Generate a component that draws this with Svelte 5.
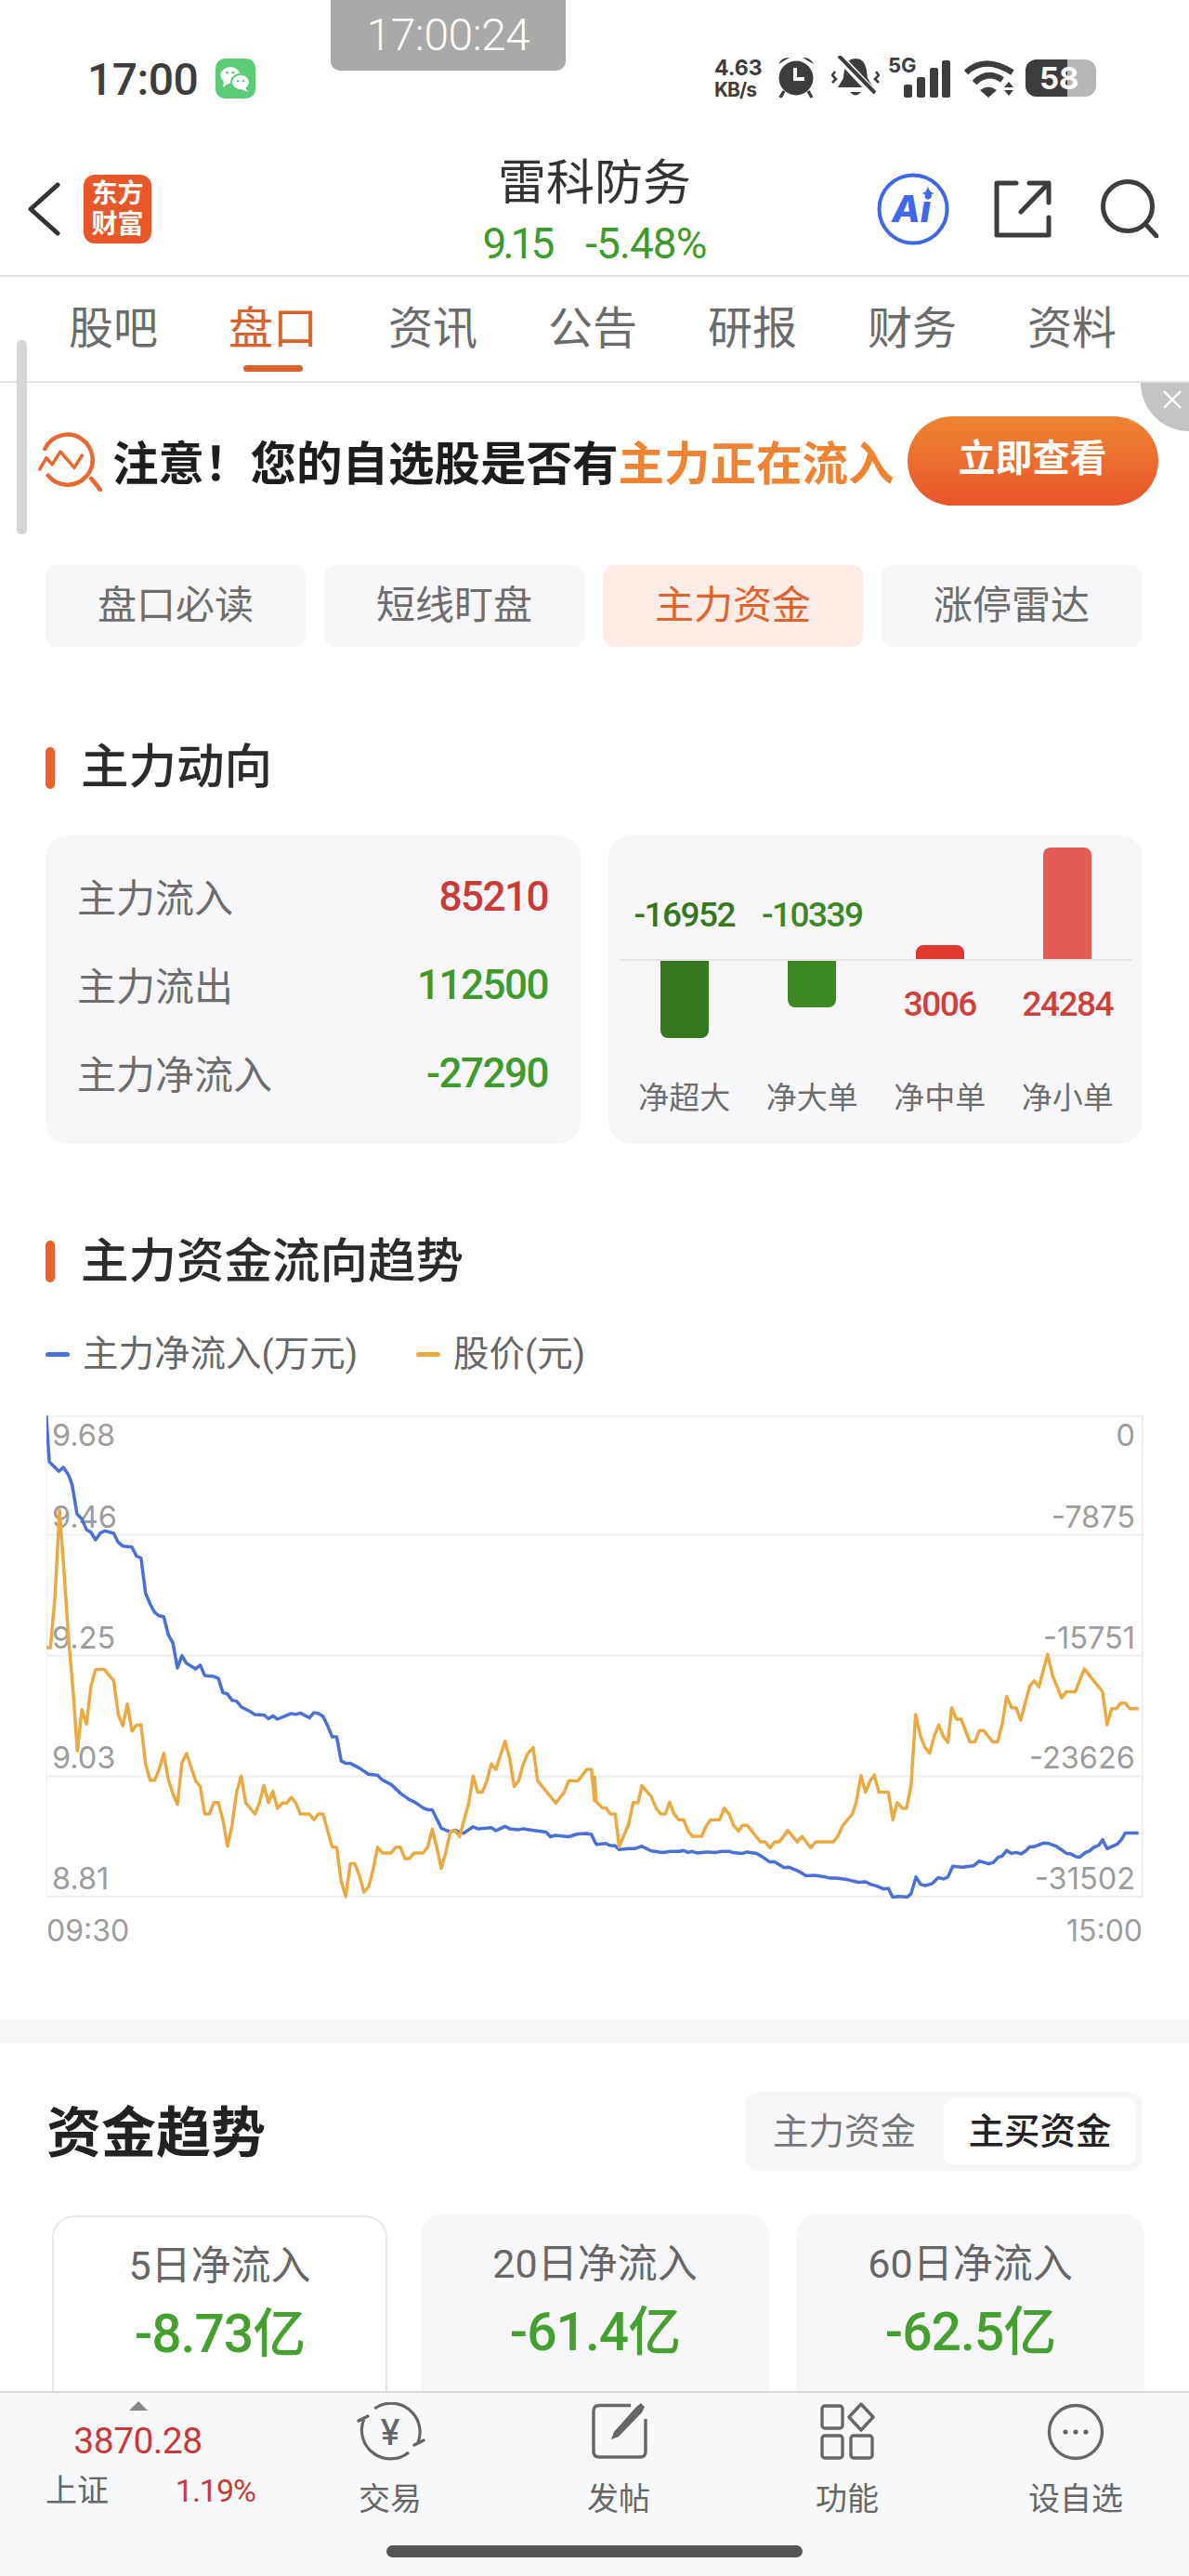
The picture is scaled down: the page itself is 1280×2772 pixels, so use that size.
<script>
	const tabs = ["股吧", "盘口", "资讯", "公告", "研报", "财务", "资料"]
	const pills = ["盘口必读", "短线盯盘", "主力资金", "涨停雷达"]

	const flowRows = [
		{ label: "主力流入", value: "85210", tone: "red" },
		{ label: "主力流出", value: "112500", tone: "green" },
		{ label: "主力净流入", value: "-27290", tone: "green" }
	]

	const flowBars = [
		{ label: "净超大", value: "-16952", height: 85, color: "#36761f", up: false },
		{ label: "净大单", value: "-10339", height: 52, color: "#3c8823", up: false },
		{ label: "净中单", value: "3006", height: 15, color: "#de3a30", up: true },
		{ label: "净小单", value: "24284", height: 120, color: "#e25c55", up: true }
	]

	const trends = [
		{ label: "5日净流入", value: "-8.73亿" },
		{ label: "20日净流入", value: "-61.4亿" },
		{ label: "60日净流入", value: "-62.5亿" }
	]

	const gridRows = [
		{ y: 1523.5, left: "9.68", right: "0", text: 1556 },
		{ y: 1651.5, left: "9.46", right: "-7875", text: 1644 },
		{ y: 1781.5, left: "9.25", right: "-15751", text: 1774 },
		{ y: 1911.5, left: "9.03", right: "-23626", text: 1903 },
		{ y: 2041, left: "8.81", right: "-31502", text: 2033 }
	]

	// traced from the reference, in two halves
	const blueLeft = "122,437 130,535 155,555 167,547 180,562 190,583 203,645 215,655 228,678 240,684 252,700 265,685 277,681 300,686 312,705 324,713 348,715 360,734 372,738 384,812 396,835 408,853 420,860 432,862 444,900 456,917 468,970 480,944 492,960 516,972 528,964 540,986 564,988 576,992 588,1022 600,1025 612,1038 624,1040 636,1052 660,1062 672,1068 696,1069 708,1077 720,1071 732,1078 756,1070 768,1066 780,1068 792,1065 816,1075 828,1064 840,1066 852,1072 864,1092 876,1115 888,1115 900,1166 912,1171 924,1171 948,1181 972,1194 996,1196 1008,1206 1032,1216 1056,1234 1080,1248 1092,1252 1116,1265 1128,1269 1140,1269 1164,1308 1188,1316 1200,1312 1212,1317 1224,1318 1248,1305 1260,1309 1296,1307 1308,1313 1332,1304 1344,1309 1368,1311 1380,1309 1404,1312 1440,1316 1452,1326 1464,1323 1500,1326 1524,1320 1548,1319 1560,1321 1568,1335"
	const blueRight = "0,1335 5,1342 30,1340 40,1344 55,1345 65,1353 90,1351 105,1351 125,1346 150,1356 180,1359 200,1357 225,1357 235,1355 247,1359 258,1357 270,1360 295,1358 320,1359 335,1357 355,1357 365,1359 390,1361 403,1358 428,1361 440,1367 462,1379 475,1379 500,1391 512,1390 537,1398 558,1408 580,1407 605,1410 620,1413 640,1413 665,1416 695,1422 715,1421 728,1426 745,1430 762,1436 775,1435 787,1454 800,1452 825,1453 835,1446 848,1411 860,1426 872,1429 890,1425 907,1412 920,1415 932,1411 945,1388 970,1390 1000,1387 1015,1377 1040,1383 1052,1380 1065,1369 1075,1367 1087,1355 1100,1361 1112,1359 1125,1362 1137,1356 1148,1347 1160,1347 1185,1339 1197,1340 1220,1347 1245,1361 1257,1362 1270,1368 1280,1369 1295,1359 1305,1356 1317,1348 1330,1344 1340,1332 1352,1351 1378,1342 1390,1332 1400,1318 1435,1318"
	const orangeLeft = "122,927 133,927 145,820 157,637 170,780 182,920 193,1020 204,1145 216,1058 228,1088 240,1008 252,973 275,973 300,997 312,1068 324,1092 336,1046 348,1103 360,1091 372,1090 384,1172 396,1207 408,1207 420,1183 432,1150 444,1205 456,1235 468,1258 480,1170 492,1150 516,1208 528,1220 540,1278 552,1278 564,1254 576,1254 588,1290 600,1346 612,1302 624,1232 636,1198 648,1254 672,1278 684,1255 696,1218 708,1254 720,1230 732,1266 744,1255 756,1255 768,1243 780,1254 792,1278 816,1278 828,1290 840,1278 852,1278 876,1348 888,1348 900,1420 912,1452 924,1383 936,1383 948,1408 960,1443 972,1432 984,1396 996,1348 1008,1360 1032,1360 1044,1348 1056,1348 1068,1372 1080,1372 1092,1360 1116,1360 1128,1348 1140,1310 1152,1348 1164,1393 1176,1358 1188,1315 1200,1313 1212,1326 1236,1256 1248,1198 1260,1232 1272,1232 1284,1208 1296,1172 1308,1184 1332,1124 1344,1160 1356,1220 1368,1208 1380,1172 1392,1150 1406,1138 1418,1208 1466,1255 1488,1232 1500,1208 1524,1208 1548,1184 1560,1184 1568,1250"
	const orangeRight = "0,1200 5,1252 20,1265 30,1265 42,1278 55,1278 65,1347 90,1300 102,1254 115,1254 125,1218 150,1242 163,1266 175,1278 187,1278 198,1253 210,1278 222,1290 235,1290 247,1314 258,1325 283,1325 295,1302 307,1290 330,1290 342,1266 355,1278 367,1302 380,1314 390,1302 403,1302 438,1337 450,1337 463,1349 475,1337 487,1337 510,1313 535,1337 547,1325 570,1349 583,1337 630,1337 642,1325 655,1302 680,1278 690,1255 703,1197 715,1232 727,1208 738,1196 750,1232 775,1232 787,1290 798,1254 812,1266 823,1266 835,1218 847,1068 860,1114 872,1138 884,1150 896,1114 908,1090 920,1114 932,1127 942,1054 955,1078 967,1078 990,1126 1003,1126 1015,1102 1027,1102 1050,1126 1063,1126 1075,1090 1087,1030 1100,1054 1112,1054 1124,1080 1148,1008 1160,997 1172,1010 1195,941 1208,986 1232,1033 1244,1020 1268,1020 1292,972 1340,1020 1352,1090 1364,1056 1376,1056 1388,1044 1400,1044 1412,1056 1435,1056"

	const toPoints = (str, offset) =>
		str
			.split(" ")
			.map(p => {
				const [x, y] = p.split(",").map(Number)
				return `${(offset + x / 2.45).toFixed(1)},${(1300 + y / 1.96).toFixed(1)}`
			})
			.join(" ")

	const bluePoints = toPoints(blueLeft, 0) + " " + toPoints(blueRight, 640)
	const orangePoints = toPoints(orangeLeft, 0) + " " + toPoints(orangeRight, 640)
</script>

<div class="page">
	<div class="status">
		<span class="status-time">17:00</span>
		<svg class="wechat" width="43" height="43" viewBox="0 0 43 43">
			<rect width="43" height="43" rx="10" fill="#5ccb76" />
			<ellipse cx="16" cy="18" rx="10.5" ry="9" fill="#fff" />
			<path d="M9 24 L8 31 L15 26 Z" fill="#fff" />
			<ellipse cx="27" cy="25.5" rx="10" ry="8.5" fill="#fff" stroke="#5ccb76" stroke-width="2" />
			<path d="M32 31 L35 36 L27 33 Z" fill="#fff" />
			<circle cx="12.5" cy="15" r="1.5" fill="#5ccb76" />
			<circle cx="19" cy="15" r="1.5" fill="#5ccb76" />
			<circle cx="24" cy="24" r="1.3" fill="#5ccb76" />
			<circle cx="30" cy="24" r="1.3" fill="#5ccb76" />
		</svg>
		<div class="status-right">
			<div class="speed"><span>4.63</span><span>KB/s</span></div>
			<svg class="alarm" width="40" height="46" viewBox="0 0 40 46">
				<circle cx="20" cy="24" r="18.5" fill="#3d3d3d" />
				<path d="M1 9 Q5 1 13 2 Z M39 9 Q35 1 27 2 Z" fill="#3d3d3d" />
				<path d="M7 38 L3 45 M33 38 L37 45" stroke="#3d3d3d" stroke-width="3.5" />
				<path d="M19 13 V25 H29" fill="none" stroke="#fff" stroke-width="4" />
			</svg>
			<svg class="bell" width="52" height="46" viewBox="0 0 52 46">
				<path d="M26 3 C37 3 38 14 39 24 L45 34 H7 L13 24 C14 14 15 3 26 3 Z" fill="#3d3d3d" />
				<path d="M20 39 H32 Q26 46 20 39 Z" fill="#3d3d3d" />
				<path d="M9 2 L46 41" stroke="#fff" stroke-width="9" />
				<path d="M8 0 L47 40" stroke="#3d3d3d" stroke-width="4" />
				<path d="M4 17 L1 21 L5 25 L1 29 M48 17 L51 21 L47 25 L51 29" fill="none" stroke="#3d3d3d" stroke-width="2.6" />
			</svg>
			<svg class="signal" width="67" height="46" viewBox="0 0 67 46">
				<text x="0" y="18" class="net-label">5G</text>
				<rect x="17" y="31" width="9" height="14" rx="2" fill="#3d3d3d" />
				<rect x="31" y="23" width="9" height="22" rx="2" fill="#3d3d3d" />
				<rect x="45" y="13" width="9" height="32" rx="2" fill="#3d3d3d" />
				<rect x="58" y="5" width="9" height="40" rx="2" fill="#3d3d3d" />
			</svg>
			<svg class="wifi" width="54" height="40" viewBox="0 0 54 40">
				<path d="M2 13 Q22 -6 52 13" fill="none" stroke="#3d3d3d" stroke-width="6.5" />
				<path d="M11 24 Q25 10 41 21" fill="none" stroke="#3d3d3d" stroke-width="6.5" />
				<path d="M17 32 Q26 25 35 32 L26 40 Z" fill="#3d3d3d" />
				<path d="M48 23 L53 29 H43 Z M43 32 H53 L48 38 Z" fill="#3d3d3d" />
			</svg>
			<div class="battery"><span class="battery-fill"></span><span class="battery-level">58</span></div>
		</div>
	</div>

	<span class="clock-pill">17:00:24</span>

	<header class="header">
		<div class="header-left">
			<svg width="36" height="58" viewBox="0 0 36 58">
				<path d="M33 3 L4 29 L33 55" fill="none" stroke="#333" stroke-width="5" stroke-linecap="round" stroke-linejoin="round" />
			</svg>
			<div class="logo"><span>东方</span><span>财富</span></div>
		</div>
		<div class="header-title">
			<div class="name">雷科防务</div>
			<div class="quote"><span class="quote-price">9.15</span><span>-5.48%</span></div>
		</div>
		<div class="header-right">
			<svg width="78" height="78" viewBox="0 0 78 78">
				<circle cx="39" cy="39" r="36.5" fill="none" stroke="#3f68e8" stroke-width="4" />
				<text x="16" y="53" class="ai-label">Ai</text>
				<path d="M55 14 Q56 21 62 22 Q56 23 55 29 Q54 23 48 22 Q54 21 55 14 Z" fill="#3f68e8" />
			</svg>
			<svg width="62" height="62" viewBox="0 0 62 62">
				<path d="M24 3 H3 V59 H59 V40" fill="none" stroke="#3d3d3d" stroke-width="5" stroke-linecap="round" stroke-linejoin="round" />
				<path d="M38 3 H59 V24 M59 3 L29 34" fill="none" stroke="#3d3d3d" stroke-width="5" stroke-linecap="round" stroke-linejoin="round" />
			</svg>
			<svg width="63" height="63" viewBox="0 0 63 63">
				<circle cx="30" cy="29" r="26.5" fill="none" stroke="#3d3d3d" stroke-width="5" />
				<path d="M49 48 L61 61" stroke="#3d3d3d" stroke-width="5" stroke-linecap="round" />
			</svg>
		</div>
	</header>

	<nav class="tabs">
		{#each tabs as tab, i}
			<div class="tab" class:tab--active={i === 1}>{tab}</div>
		{/each}
	</nav>

	<span class="scrollbar"></span>

	<div class="banner">
		<svg class="banner-icon" width="70" height="66" viewBox="0 0 70 66">
			<path d="M8.3 20 A27 27 0 1 1 11.7 48.7" fill="none" stroke="#e8692f" stroke-width="4.5" stroke-linecap="round" />
			<path d="M2.7 42 L10 29.7 L16 37 L25 23 L40 40.3 L48.3 27" fill="none" stroke="#e8692f" stroke-width="3.5" stroke-linecap="round" stroke-linejoin="round" />
			<path d="M58.3 52 L68 64" stroke="#e8692f" stroke-width="4.5" stroke-linecap="round" />
		</svg>
		<p class="banner-text">注意！您的自选股是否有<em>主力正在流入</em></p>
		<div class="banner-btn">立即查看</div>
		<div class="banner-close">
			<svg width="24" height="24" viewBox="0 0 24 24">
				<path d="M3 3 L21 21 M21 3 L3 21" stroke="#fff" stroke-width="2.4" />
			</svg>
		</div>
	</div>

	<div class="pills">
		{#each pills as pill, i}
			<div class="pill" class:pill--active={i === 2}>{pill}</div>
		{/each}
	</div>

	<h2 class="section-title section-title--first">主力动向</h2>

	<div class="flow-cards">
		<div class="flow-card flow-list">
			{#each flowRows as row}
				<div class="flow-row">
					<span class="flow-label">{row.label}</span>
					<span class="num {row.tone}">{row.value}</span>
				</div>
			{/each}
		</div>
		<div class="flow-card flow-chart">
			{#each flowBars as bar}
				<div class="bar-col">
					<div class="bar-top">
						{#if bar.up}
							<span class="bar" style="height:{bar.height}px;background:{bar.color}"></span>
						{:else}
							<span class="bar-value" style="color:{bar.color}">{bar.value}</span>
						{/if}
					</div>
					<div class="bar-bottom">
						{#if bar.up}
							<span class="bar-value" style="color:#cf3f3b">{bar.value}</span>
						{:else}
							<span class="bar bar--down" style="height:{bar.height}px;background:{bar.color}"></span>
						{/if}
					</div>
					<span class="bar-label">{bar.label}</span>
				</div>
			{/each}
		</div>
	</div>

	<h2 class="section-title section-title--second">主力资金流向趋势</h2>

	<div class="legend">
		<span class="legend-item"><i class="legend-line legend-line--blue"></i>主力净流入(万元)</span>
		<span class="legend-item"><i class="legend-line legend-line--orange"></i>股价(元)</span>
	</div>

	<svg class="chart" width="1181" height="520" viewBox="50 1523 1181 520">
		{#each gridRows as row}
			<line x1="50" x2="1230" y1={row.y} y2={row.y} stroke="#eeeeee" stroke-width="2" />
		{/each}
		<line x1="50" x2="50" y1="1523" y2="2041" stroke="#eeeeee" stroke-width="2" />
		<line x1="1230" x2="1230" y1="1523" y2="2041" stroke="#eeeeee" stroke-width="2" />
		{#each gridRows as row}
			<text x="56" y={row.text} class="axis">{row.left}</text>
			<text x="1222" y={row.text} class="axis" text-anchor="end">{row.right}</text>
		{/each}
		<polyline points={bluePoints} fill="none" stroke="#4a6fd6" stroke-width="3.5" stroke-linejoin="round" />
		<polyline points={orangePoints} fill="none" stroke="#e9aa43" stroke-width="3.5" stroke-linejoin="round" />
	</svg>

	<div class="time-axis"><span>09:30</span><span>15:00</span></div>

	<div class="band"></div>

	<div class="trend-head">
		<h2 class="trend-title">资金趋势</h2>
		<div class="toggle">
			<span class="toggle-item">主力资金</span>
			<span class="toggle-item toggle-item--on">主买资金</span>
		</div>
	</div>

	<div class="trend-cards">
		{#each trends as item, i}
			<div class="trend-card" class:trend-card--on={i === 0}>
				<div class="trend-label">{item.label}</div>
				<div class="trend-value">{item.value}</div>
			</div>
		{/each}
	</div>

	<footer class="bottom">
		<div class="market">
			<span class="market-arrow"></span>
			<div class="market-price">3870.28</div>
			<div class="market-row"><span>上证</span><span class="market-pct">1.19%</span></div>
		</div>
		<div class="action">
			<svg width="76" height="64" viewBox="0 0 76 64">
				<path d="M21.3 6.7 A31 31 0 0 1 68 43.3 M58 54 A31 31 0 0 1 9.7 18.3" fill="none" stroke="#666" stroke-width="3.2" />
				<path d="M4 20 L14 15 M64 46 L74 41" fill="none" stroke="#666" stroke-width="3.4" stroke-linecap="round" />
				<text x="38" y="46" class="yen" text-anchor="middle">¥</text>
			</svg>
			<span>交易</span>
		</div>
		<div class="action">
			<svg width="62" height="64" viewBox="0 0 62 64">
				<path d="M44 3.5 H10 Q4 3.5 4 9.5 V53 Q4 59 10 59 H54 Q60 59 60 53 V18" fill="none" stroke="#666" stroke-width="3.4" />
				<path d="M23 40 L26 32 L50 5 L55 1 L59 5 L56 11 L31 37 Z" fill="#666" />
			</svg>
			<span>发帖</span>
		</div>
		<div class="action">
			<svg width="62" height="64" viewBox="0 0 62 64">
				<rect x="4" y="4" width="22" height="24" rx="3" fill="none" stroke="#666" stroke-width="3.4" />
				<path d="M46 2 L59 16 L46 30 L33 16 Z" fill="none" stroke="#666" stroke-width="3.4" stroke-linejoin="round" />
				<rect x="4" y="36" width="22" height="24" rx="3" fill="none" stroke="#666" stroke-width="3.4" />
				<rect x="35" y="36" width="23" height="24" rx="3" fill="none" stroke="#666" stroke-width="3.4" />
			</svg>
			<span>功能</span>
		</div>
		<div class="action">
			<svg width="62" height="64" viewBox="0 0 62 64">
				<circle cx="31" cy="32" r="28.5" fill="none" stroke="#666" stroke-width="3.4" />
				<circle cx="20" cy="32" r="2.6" fill="#666" />
				<circle cx="31" cy="32" r="2.6" fill="#666" />
				<circle cx="42" cy="32" r="2.6" fill="#666" />
			</svg>
			<span>设自选</span>
		</div>
		<span class="home-bar"></span>
	</footer>
</div>

<style>
	:global(body) {
		margin: 0;
		background: #fff;
	}

	.page {
		position: relative;
		width: 1280px;
		height: 2772px;
		overflow: hidden;
		background: #fff;
		color: #333;
		font-family: Roboto, "Noto Sans CJK SC", sans-serif;
	}

	/* Status bar */

	.status {
		display: flex;
		align-items: center;
		height: 46px;
		padding: 60px 0 44px 94px;
	}

	.status-time {
		width: 122px;
		padding-top: 4px;
		font-size: 48px;
		font-weight: 500;
		letter-spacing: -0.5px;
		color: #3d3d3d;
	}

	.wechat {
		margin-left: 16px;
		margin-top: 2px;
	}

	.status-right {
		display: flex;
		align-items: flex-start;
		margin-left: 494px;
	}

	.speed {
		display: flex;
		flex-direction: column;
		width: 52px;
		font-family: Inter, sans-serif;
		font-size: 23px;
		font-weight: 700;
		line-height: 27px;
		color: #3d3d3d;
		white-space: nowrap;
	}

	.speed span:last-child {
		font-size: 21px;
		line-height: 20px;
		letter-spacing: -1px;
	}

	.alarm {
		margin-left: 16px;
	}

	.bell {
		margin-left: 18px;
	}

	.signal {
		margin-left: 9px;
		overflow: visible;
	}

	.net-label {
		font-family: Inter, sans-serif;
		font-size: 22px;
		font-weight: 700;
		fill: #3d3d3d;
	}

	.wifi {
		margin-left: 15px;
		margin-top: 5px;
	}

	.battery {
		position: relative;
		width: 76px;
		height: 40px;
		margin-left: 12px;
		margin-top: 4px;
		border-radius: 12px;
		background: #b5b5b5;
		overflow: hidden;
	}

	.battery-fill {
		display: block;
		width: 45px;
		height: 40px;
		background: #3d3d3d;
	}

	.battery-level {
		position: absolute;
		left: 15px;
		top: 0;
		font-family: Inter, sans-serif;
		font-size: 33px;
		font-weight: 700;
		line-height: 40px;
		color: #fff;
	}

	.clock-pill {
		position: absolute;
		left: 356px;
		top: 0;
		width: 253px;
		height: 76px;
		border-radius: 0 0 10px 10px;
		background: #a9a9a9;
		color: #fff;
		font-size: 48px;
		font-weight: 300;
		line-height: 76px;
		letter-spacing: -0.5px;
		text-align: center;
	}

	/* Header */

	.header {
		display: grid;
		grid-template-columns: 1fr auto 1fr;
		height: 146px;
		border-bottom: 2px solid #dddddd;
		box-sizing: content-box;
	}

	.header-left {
		display: flex;
		align-items: flex-start;
		padding: 46px 0 0 29px;
	}

	.logo {
		display: flex;
		flex-direction: column;
		justify-content: center;
		align-items: center;
		width: 73px;
		height: 74px;
		margin: -8px 0 0 25px;
		border-radius: 12px;
		background: #e8572a;
		color: #fff;
		font-size: 28px;
		font-weight: 700;
		line-height: 33px;
	}

	.header-title {
		text-align: center;
	}

	.name {
		margin-top: 20px;
		font-size: 52px;
		line-height: 56px;
		color: #333;
	}

	.quote {
		display: flex;
		justify-content: center;
		gap: 37px;
		margin-top: 11px;
		font-size: 46px;
		line-height: 50px;
		letter-spacing: -1px;
		color: #3d9a2b;
	}

	.quote-price {
		letter-spacing: -4px;
	}

	.header-right {
		display: flex;
		justify-content: flex-end;
		align-items: flex-start;
		gap: 48px;
		padding: 36px 33px 0 0;
	}

	.header-right svg:nth-child(2) {
		margin-top: 8px;
	}

	.header-right svg:nth-child(3) {
		margin-top: 7px;
		margin-left: 4px;
	}

	.ai-label {
		font-family: Inter, sans-serif;
		font-size: 40px;
		font-style: italic;
		font-weight: 800;
		fill: #3f68e8;
	}

	/* Tabs */

	.tabs {
		display: grid;
		grid-template-columns: repeat(7, 172px);
		height: 112px;
		padding: 0 36px;
		border-bottom: 2px solid #e2e2e2;
	}

	.tab {
		position: relative;
		padding-top: 28px;
		font-size: 48px;
		line-height: 56px;
		text-align: center;
		color: #6b6b6b;
	}

	.tab--active {
		color: #d9622b;
	}

	.tab--active::after {
		content: "";
		position: absolute;
		left: 54px;
		bottom: 10px;
		width: 64px;
		height: 7px;
		border-radius: 4px;
		background: #d9622b;
	}

	.scrollbar {
		position: absolute;
		left: 18px;
		top: 366px;
		width: 11px;
		height: 209px;
		border-radius: 5px;
		background: #d6d6d6;
	}

	/* Banner */

	.banner {
		position: relative;
		display: flex;
		align-items: center;
		height: 96px;
		padding: 36px 0 64px 40px;
	}

	.banner-text {
		margin: 8px 0 0 11px;
		font-size: 49.5px;
		font-weight: 700;
		line-height: 60px;
		color: #1d1d1d;
		white-space: nowrap;
	}

	.banner-text em {
		font-style: normal;
		color: #ee8433;
	}

	.banner-btn {
		width: 270px;
		height: 96px;
		margin-left: 14px;
		border-radius: 48px;
		background: linear-gradient(#ee8433, #e8552a);
		color: #fff;
		font-size: 40px;
		font-weight: 700;
		line-height: 92px;
		text-align: center;
	}

	.banner-close {
		position: absolute;
		right: 0;
		top: 0;
		display: flex;
		justify-content: flex-end;
		width: 52px;
		height: 52px;
		padding: 6px 6px 0 0;
		box-sizing: border-box;
		border-bottom-left-radius: 52px;
		background: #c4c4c4;
	}

	/* Pills */

	.pills {
		display: grid;
		grid-template-columns: repeat(4, 280px);
		gap: 20px;
		padding-left: 49px;
	}

	.pill {
		height: 88px;
		border-radius: 12px;
		background: #f7f7f9;
		color: #6d6d6d;
		font-size: 42px;
		line-height: 88px;
		text-align: center;
	}

	.pill--active {
		background: #fdece6;
		color: #e2622d;
	}

	/* Section titles */

	.section-title {
		position: relative;
		height: 60px;
		margin: 0;
		padding-left: 87px;
		font-size: 51.5px;
		font-weight: 500;
		line-height: 60px;
		color: #2b2b2b;
	}

	.section-title::before {
		content: "";
		position: absolute;
		left: 49px;
		top: 8px;
		width: 10px;
		height: 45px;
		border-radius: 5px;
		background: #e8622e;
	}

	.section-title--first {
		margin-top: 100px;
	}

	.section-title--second {
		margin-top: 96px;
		line-height: 62px;
	}

	/* Flow cards */

	.flow-cards {
		display: grid;
		grid-template-columns: 576px 575px;
		gap: 30px;
		margin-top: 43px;
		padding-left: 49px;
	}

	.flow-card {
		height: 332px;
		border-radius: 24px;
		background: #f7f7fa;
		box-sizing: border-box;
	}

	.flow-list {
		display: flex;
		flex-direction: column;
		gap: 35px;
		padding: 36px 35px 0;
	}

	.flow-row {
		display: flex;
		justify-content: space-between;
		align-items: center;
		height: 60px;
		font-size: 42px;
		color: #6d6d6d;
	}

	.flow-label {
		margin: 0 0 3px -1px;
	}

	.num {
		font-size: 44px;
		font-weight: 500;
		letter-spacing: -1.5px;
	}

	.red {
		color: #cb3a36;
	}

	.green {
		color: #3f9a2d;
	}

	.flow-chart {
		display: grid;
		grid-template-columns: repeat(4, 137.5px);
		padding: 13px 0 0 13px;
		position: relative;
	}

	.flow-chart::before {
		content: "";
		position: absolute;
		left: 13px;
		right: 12px;
		top: 133px;
		height: 2px;
		background: #e4e4e6;
	}

	.bar-col {
		display: flex;
		flex-direction: column;
		align-items: center;
	}

	.bar-top {
		display: flex;
		flex-direction: column;
		justify-content: flex-end;
		align-items: center;
		width: 100%;
		height: 120px;
	}

	.bar-bottom {
		display: flex;
		flex-direction: column;
		align-items: center;
		width: 100%;
		height: 128px;
	}

	.bar {
		display: block;
		width: 52px;
		border-radius: 8px 8px 0 0;
	}

	.bar--down {
		border-radius: 0 0 8px 8px;
	}

	.bar-value {
		font-size: 37px;
		font-weight: 500;
		line-height: 44px;
		letter-spacing: -1.5px;
	}

	.bar-top .bar-value {
		margin-bottom: 25px;
	}

	.bar-bottom .bar-value {
		margin-top: 27px;
	}

	.bar-label {
		font-size: 33px;
		line-height: 44px;
		color: #6d6d6d;
	}

	/* Legend and chart */

	.legend {
		display: flex;
		gap: 63px;
		height: 40px;
		margin-top: 50px;
		padding-left: 49px;
		font-size: 38.5px;
		line-height: 40px;
		color: #666;
	}

	.legend-item {
		display: flex;
		align-items: center;
	}

	.legend-line {
		width: 26px;
		height: 5px;
		margin-right: 14px;
		border-radius: 3px;
	}

	.legend-line--blue {
		background: #4a6fd6;
	}

	.legend-line--orange {
		background: #e9aa43;
	}

	.chart {
		display: block;
		margin: 46px 0 0 50px;
	}

	.axis {
		font-family: Inter, sans-serif;
		font-size: 32.5px;
		fill: #9c9c9c;
	}

	.time-axis {
		display: flex;
		justify-content: space-between;
		height: 40px;
		margin-top: 15px;
		padding: 0 50px;
		font-family: Inter, sans-serif;
		font-size: 32px;
		line-height: 40px;
		color: #9c9c9c;
	}

	.band {
		height: 26px;
		margin-top: 75px;
		background: #f7f7f9;
	}

	/* Fund trend */

	.trend-head {
		display: flex;
		justify-content: space-between;
		align-items: center;
		height: 85px;
		margin-top: 52px;
		padding: 0 50px;
	}

	.trend-title {
		margin: -6px 0 0;
		font-size: 59px;
		font-weight: 700;
		color: #222;
	}

	.toggle {
		display: flex;
		align-items: center;
		width: 428px;
		height: 85px;
		padding-right: 7px;
		box-sizing: border-box;
		border-radius: 14px;
		background: #f7f7f9;
	}

	.toggle-item {
		flex: 1;
		font-size: 38.5px;
		line-height: 71px;
		text-align: center;
		color: #777;
	}

	.toggle-item--on {
		flex: none;
		width: 207px;
		border-radius: 10px;
		background: #fff;
		font-weight: 500;
		color: #222;
	}

	.trend-cards {
		display: grid;
		grid-template-columns: repeat(3, 375px);
		gap: 29px;
		margin-top: 46px;
		padding-left: 49px;
	}

	.trend-card {
		height: 240px;
		padding-top: 26px;
		box-sizing: border-box;
		border-radius: 24px;
		background: #f7f7f9;
		text-align: center;
	}

	.trend-card--on {
		margin: 2px 7px 0;
		padding-top: 24px;
		border: 2px solid #e8e8e8;
		background: #fff;
	}

	.trend-label {
		font-size: 43px;
		line-height: 56px;
		color: #666;
	}

	.trend-value {
		margin-top: 13px;
		font-size: 57px;
		font-weight: 500;
		line-height: 66px;
		letter-spacing: -1px;
		color: #45a030;
	}

	/* Bottom bar */

	.bottom {
		position: absolute;
		left: 0;
		right: 0;
		bottom: 0;
		display: grid;
		grid-template-columns: 297px repeat(4, 246px);
		height: 197px;
		border-top: 2px solid #d8d8d8;
		background: #f7f8fa;
	}

	.market {
		position: relative;
		padding: 30px 22px 0 49px;
	}

	.market-arrow {
		position: absolute;
		left: 139px;
		top: 9px;
		border-left: 10px solid transparent;
		border-right: 10px solid transparent;
		border-bottom: 10px solid #888;
	}

	.market-price {
		margin-left: -49px;
		width: 297px;
		font-size: 39px;
		line-height: 44px;
		letter-spacing: -0.5px;
		text-align: center;
		color: #c8383a;
	}

	.market-row {
		display: flex;
		justify-content: space-between;
		margin-top: 9px;
		font-size: 34px;
		line-height: 44px;
		color: #666;
	}

	.market-pct {
		color: #c8383a;
		letter-spacing: -1px;
	}

	.action {
		display: flex;
		flex-direction: column;
		align-items: center;
		padding-top: 10px;
		font-size: 34px;
		line-height: 44px;
		color: #666;
	}

	.action span {
		margin-top: 18px;
	}

	.yen {
		font-family: Inter, sans-serif;
		font-size: 38px;
		font-weight: 500;
		fill: #666;
	}

	.home-bar {
		position: absolute;
		left: 416px;
		bottom: 20px;
		width: 448px;
		height: 13px;
		border-radius: 7px;
		background: #555;
	}
</style>
